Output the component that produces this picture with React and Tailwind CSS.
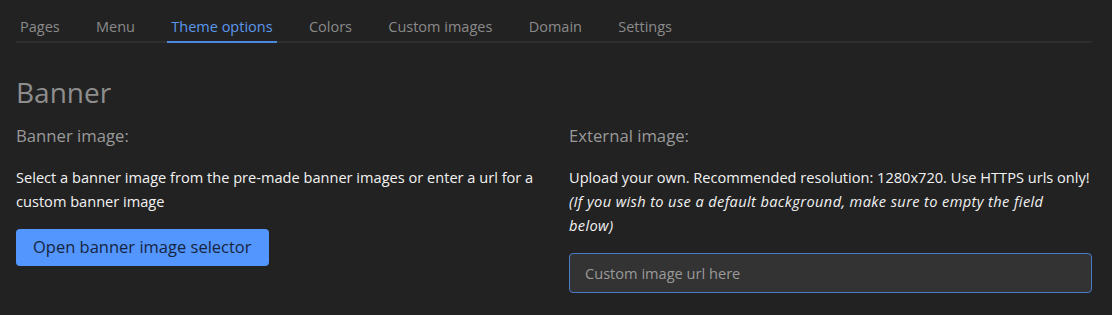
export default function App() {
  const tabs = ["Pages", "Menu", "Theme options", "Colors", "Custom images", "Domain", "Settings"];
  return (
    <div className="min-h-[315px] w-full bg-[#222222] pl-4 pr-5 pb-6" style={{ fontFamily: '"Open Sans", "Noto Sans", sans-serif' }}>
      <nav className="flex gap-[28.3px] border-b-2 border-[#2e2e2e] pt-[17px]">
        {tabs.map((t) => (
          <div
            key={t}
            className={
              t === "Theme options"
                ? "-mb-[2px] border-b-2 border-[#4d88e0] px-1 pb-1 text-[14.5px] leading-5 text-[#5c97ec]"
                : "-mb-[2px] border-b-2 border-transparent px-1 pb-1 text-[14.5px] leading-5 text-[#8a8a8a]"
            }
          >
            {t}
          </div>
        ))}
      </nav>
      <h1 className="mt-[33px] text-[28px] leading-[1.2] text-[#8e8e8e]">Banner</h1>
      <div className="mt-[14px] grid grid-cols-2 gap-[30px]">
        <div>
          <div className="text-[16.7px] leading-6 text-[#9a9a9a]">Banner image:</div>
          <p className="mt-[17px] text-[14.6px] leading-6 text-[#f2f2f2]">
            Select a banner image from the pre-made banner images or enter a url for a custom banner image
          </p>
          <button className="mt-[16px] h-[37px] rounded-[4px] bg-[#5296fe] px-[17px] text-[16.5px] text-[#16253f]">
            Open banner image selector
          </button>
        </div>
        <div>
          <div className="text-[16.7px] leading-6 text-[#9a9a9a]">External image:</div>
          <p className="mt-[17px] text-[14.6px] leading-6 text-[#f2f2f2]">
            Upload your own. Recommended resolution: 1280x720. Use HTTPS urls only!
            <br />
            <i className="tracking-[0.38px]">(If you wish to use a default background, make sure to empty the field below)</i>
          </p>
          <input
            className="mt-4 block h-10 w-full rounded-[4px] border border-[#4a7bcb] bg-[#333333] px-[15px] text-[14.6px] text-[#ddd] outline-none placeholder:text-[#9a9a9a]"
            placeholder="Custom image url here"
          />
        </div>
      </div>
    </div>
  );
}
